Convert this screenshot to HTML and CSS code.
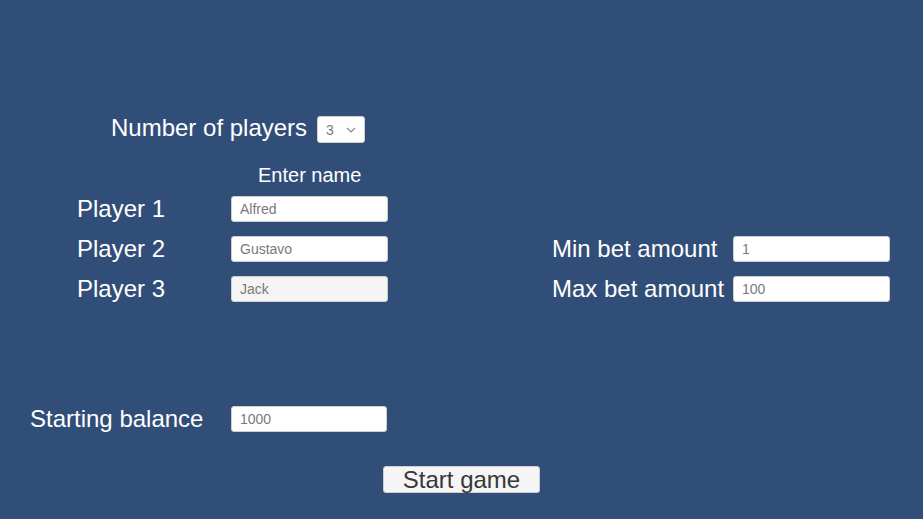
FILE: index.html
```html
<!DOCTYPE html>
<html lang="en">
<head>
<meta charset="utf-8">
<title>Game setup</title>
<link rel="stylesheet" href="styles.css">
</head>
<body>
<main class="page">
  <div class="count-row">
    <span class="label count-label">Number of players</span>
    <div class="dropdown">
      <span class="dropdown-value">3</span>
      <svg class="chevron" width="10" height="6" viewBox="0 0 10 6"><path d="M1 1 L5 5 L9 1" fill="none" stroke="#888" stroke-width="1.2"/></svg>
    </div>
  </div>
  <div class="enter-name">Enter name</div>
  <div class="grid">
    <span class="label player">Player 1</span>
    <div class="field">Alfred</div>
    <span></span><span></span><span></span>

    <span class="label player">Player 2</span>
    <div class="field">Gustavo</div>
    <span></span>
    <span class="label">Min bet amount</span>
    <div class="field">1</div>

    <span class="label player">Player 3</span>
    <div class="field field-active">Jack</div>
    <span></span>
    <span class="label">Max bet amount</span>
    <div class="field">100</div>
  </div>
  <div class="balance-row">
    <span class="label balance-label">Starting balance</span>
    <div class="field">1000</div>
  </div>
  <div class="button-row">
    <button class="start">Start game</button>
  </div>
</main>
</body>
</html>
```

FILE: styles.css
```css
* { box-sizing: border-box; }
html, body {
  margin: 0;
  height: 100%;
}
body {
  background: #314e79;
  font-family: "Liberation Sans", Arial, sans-serif;
  color: #ffffff;
  overflow: hidden;
}
.page {
  padding-top: 116px;
}
.label {
  font-size: 24px;
  line-height: 26px;
  color: #ffffff;
  white-space: nowrap;
}
.count-row {
  display: flex;
  align-items: center;
  gap: 10px;
  margin-left: 111px;
  height: 27px;
}
.count-label {
  padding-bottom: 3px;
}
.dropdown {
  width: 48px;
  height: 27px;
  background: #ffffff;
  border: 1px solid #d0d0d0;
  border-radius: 3px;
  display: flex;
  align-items: center;
  justify-content: space-between;
  padding: 0 8px 0 8px;
}
.dropdown-value {
  font-size: 14px;
  color: #7a7a7a;
}
.chevron { margin-top: 1px; }
.enter-name {
  margin-top: 22px;
  margin-left: 258px;
  font-size: 20px;
  line-height: 20px;
  height: 20px;
}
.grid {
  margin-top: 11px;
  display: grid;
  grid-template-columns: 231px 157px 164px 181px 157px;
  grid-auto-rows: 26px;
  row-gap: 14px;
  align-items: center;
}
.player {
  padding-left: 77px;
}
.field {
  height: 26px;
  width: 157px;
  background: #ffffff;
  border: 1px solid #cfcfcf;
  border-radius: 3px;
  font-size: 14px;
  line-height: 24px;
  color: #7a7a7a;
  padding-left: 8px;
}
.field-active {
  background: #f5f5f5;
}
.balance-row {
  margin-top: 104px;
  display: flex;
  align-items: center;
  height: 26px;
}
.balance-label {
  width: 231px;
  padding-left: 30px;
}
.balance-row .field { width: 156px; }
.button-row {
  margin-top: 34px;
  padding-left: 383px;
}
.start {
  width: 157px;
  height: 27px;
  background: #f5f5f5;
  border: 1px solid #cfcfcf;
  border-radius: 3px;
  font-family: "Liberation Sans", Arial, sans-serif;
  font-size: 24px;
  line-height: 25px;
  color: #383838;
  padding: 0;
  display: flex;
  align-items: center;
  justify-content: center;
}
```
